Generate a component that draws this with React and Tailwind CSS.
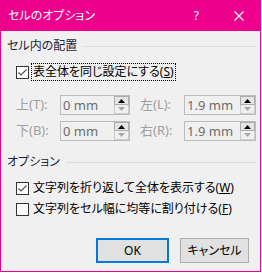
import React from 'react';

const font = "font-['Noto_Sans','Noto_Sans_CJK_JP',sans-serif] [font-feature-settings:'palt']";

const Check = ({ checked }) => (
  <div className="w-[13px] h-[13px] border border-[#333333] bg-white shrink-0 flex items-center justify-center">
    {checked && (
      <svg width="11" height="11" viewBox="0 0 11 11">
        <path d="M1.5 5.5 L4 8 L9.5 2.5" fill="none" stroke="#4a4a4a" strokeWidth="1.1" />
      </svg>
    )}
  </div>
);

const Spin = ({ value, width }) => (
  <div className={`h-[20px] border border-[#bcbcbc] bg-[#f0f0f0] flex items-stretch ${width}`}>
    <div className="flex-1 pl-[2px] flex items-center text-[13px] text-[#6d6d6d] leading-none">{value}</div>
    <div className="w-[15px] flex flex-col">
      <div className="h-[9px] border border-[#acacac] bg-[#e5e5e5] flex items-center justify-center">
        <svg width="7" height="4" viewBox="0 0 7 4">
          <path d="M0 4 L3.5 0 L7 4 Z" fill="#000" />
        </svg>
      </div>
      <div className="h-[9px] border border-t-0 border-[#cccccc] bg-[#f0f0f0] flex items-center justify-center">
        <svg width="7" height="4" viewBox="0 0 7 4">
          <path d="M0 0 L7 0 L3.5 4 Z" fill="#a8a8a8" />
        </svg>
      </div>
    </div>
  </div>
);

const Header = ({ label, className }) => (
  <div className={`h-[16px] flex items-center text-[12px] leading-[16px] text-[#1e1e3c] ${className}`}>
    <span>{label}</span>
    <div className="flex-1 h-px bg-[#dcdcdc] ml-[6px]" />
  </div>
);

export default function App() {
  return (
    <div className={`w-[262px] h-[273px] bg-white ${font}`}>
      <div className="w-[261px] h-[272px] border border-[#ec008c] bg-[#f0f0f0] flex flex-col">
        {/* title bar */}
        <div className="h-[30px] bg-[#ec008c] flex items-center pl-[7px] pr-[16px] text-white">
          <span className="flex-1 text-[12px] leading-none">セルのオプション</span>
          <span className="text-[12px] leading-none mr-[35px]">?</span>
          <svg width="10" height="10" viewBox="0 0 10 10">
            <path d="M0.5 0.5 L9.5 9.5 M9.5 0.5 L0.5 9.5" stroke="#fff" strokeWidth="1.2" />
          </svg>
        </div>

        <div className="flex flex-col pl-[6px] pr-[4px] text-[12px] text-black">
          <Header label="セル内の配置" className="mt-[7px]" />

          <div className="h-[18px] mt-[9px] pl-[9px] flex items-center">
            <Check checked />
            <span className="ml-[2px] px-[1px] h-[18px] flex items-center border border-dotted border-black leading-none">
              表全体を同じ設定にする(<span className="underline">S</span>)
            </span>
          </div>

          <div className="h-[20px] mt-[14px] pl-[9px] flex items-center text-[13px] text-[#a0a0a0]">
            <span className="w-[44px]">上(T):</span>
            <Spin value="0 mm" width="w-[70px]" />
            <span className="w-[44px] ml-[10px]">左(L):</span>
            <Spin value="1.9 mm" width="w-[72px]" />
          </div>
          <div className="h-[20px] mt-[6px] pl-[9px] flex items-center text-[13px] text-[#a0a0a0]">
            <span className="w-[44px]">下(B):</span>
            <Spin value="0 mm" width="w-[70px]" />
            <span className="w-[44px] ml-[10px]">右(R):</span>
            <Spin value="1.9 mm" width="w-[72px]" />
          </div>

          <Header label="オプション" className="mt-[13px]" />

          <div className="h-[18px] mt-[9px] pl-[9px] flex items-center">
            <Check checked />
            <span className="ml-[4px] leading-none">
              文字列を折り返して全体を表示する(<span className="underline">W</span>)
            </span>
          </div>
          <div className="h-[18px] mt-[3px] pl-[9px] flex items-center">
            <Check />
            <span className="ml-[4px] leading-none">
              文字列をセル幅に均等に割り付ける(<span className="underline">F</span>)
            </span>
          </div>

          <div className="mt-[20px] pr-[7px] flex justify-end gap-[11px]">
            <button className="w-[73px] h-[25px] border-2 border-[#0078d7] bg-[#e1e1e1] text-[12px] text-black leading-none">
              OK
            </button>
            <button className="w-[69px] h-[25px] border border-[#adadad] bg-[#e1e1e1] text-[12px] text-black leading-none">
              キャンセル
            </button>
          </div>
        </div>
      </div>
    </div>
  );
}
